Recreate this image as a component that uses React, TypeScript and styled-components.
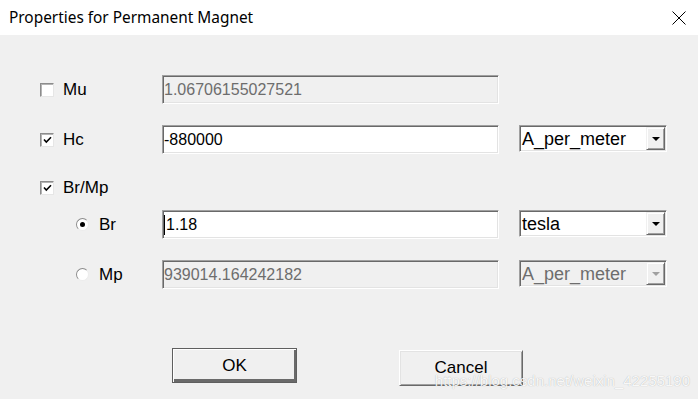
import styled, { createGlobalStyle } from 'styled-components';

const GlobalStyle = createGlobalStyle`
    html, body {
        margin: 0;
        padding: 0;
        background: #f0f0f0;
    }
    * {
        box-sizing: border-box;
    }
`;

const Dialog = styled.div`
    position: relative;
    width: 698px;
    height: 399px;
    overflow: hidden;
    display: flex;
    flex-direction: column;
    background: #f0f0f0;
    font-family: 'Liberation Sans', Arial, sans-serif;
    color: #000;
`;

const TitleBar = styled.div`
    height: 35px;
    flex: none;
    display: flex;
    align-items: center;
    justify-content: space-between;
    padding: 0 12px 0 9px;
    background: #fff;
`;

const TitleText = styled.span`
    font-family: 'Noto Sans', sans-serif;
    font-size: 15.4px;
    color: #000;
`;

const CloseIcon = styled.svg`
    width: 14px;
    height: 14px;
`;

const Form = styled.div`
    display: flex;
    flex-direction: column;
    padding-top: 40px;
`;

const Row = styled.div<{ $gap: number; $height: number }>`
    display: grid;
    grid-template-columns: 142px 337px 148px;
    column-gap: 20px;
    align-items: start;
    height: ${(p) => p.$height}px;
    margin-top: ${(p) => p.$gap}px;
`;

const Choice = styled.div<{ $indent: number; $gap: number; $height: number }>`
    display: flex;
    align-items: center;
    height: ${(p) => p.$height}px;
    padding-left: ${(p) => p.$indent}px;
    gap: ${(p) => p.$gap}px;
    font-size: 17px;
`;

const CheckBox = styled.span`
    width: 14px;
    height: 14px;
    display: flex;
    align-items: center;
    justify-content: center;
    background: #fff;
    border: 1px solid;
    border-color: #8c8c8c #e6e6e6 #e6e6e6 #8c8c8c;
    box-shadow: inset 1px 1px 0 #b4b4b4;
`;

const Radio = styled.span`
    width: 13px;
    height: 13px;
    border-radius: 50%;
    display: flex;
    align-items: center;
    justify-content: center;
    background: #fff;
    border: 1px solid;
    border-color: #8c8c8c #ececec #ececec #8c8c8c;
`;

const RadioDot = styled.span`
    width: 5px;
    height: 5px;
    border-radius: 50%;
    background: #000;
`;

const Field = styled.div<{ $disabled?: boolean }>`
    height: 29px;
    display: flex;
    align-items: center;
    padding-left: 1px;
    font-size: 16px;
    white-space: nowrap;
    background: ${(p) => (p.$disabled ? '#f0f0f0' : '#fff')};
    color: ${(p) => (p.$disabled ? '#6d6d6d' : '#000')};
    border: 1px solid;
    border-color: #a0a0a0 #fff #fff #a0a0a0;
    box-shadow: inset 1px 1px 0 #696969, inset -1px -1px 0 #e3e3e3;
`;

const Caret = styled.span`
    width: 1px;
    height: 20px;
    margin-right: 1px;
    background: #000;
`;

const Select = styled.div<{ $disabled?: boolean }>`
    height: 27px;
    display: flex;
    align-items: stretch;
    font-size: 18px;
    background: ${(p) => (p.$disabled ? '#f0f0f0' : '#fff')};
    color: ${(p) => (p.$disabled ? '#6d6d6d' : '#000')};
    border: 1px solid;
    border-color: #a0a0a0 #fff #fff #a0a0a0;
    box-shadow: inset 1px 1px 0 #696969, inset -1px -1px 0 #e3e3e3;
    padding: 1px;
`;

const SelectValue = styled.span`
    flex: 1;
    display: flex;
    align-items: center;
    padding-left: 1px;
    padding-top: 1px;
`;

const SelectButton = styled.span`
    width: 19px;
    display: flex;
    align-items: center;
    justify-content: center;
    background: #f0f0f0;
    border: 1px solid;
    border-color: #f0f0f0 #696969 #696969 #f0f0f0;
    box-shadow: inset 1px 1px 0 #fff, inset -1px -1px 0 #a0a0a0;
`;

const Arrow = styled.span<{ $disabled?: boolean }>`
    width: 0;
    height: 0;
    border-left: 4px solid transparent;
    border-right: 4px solid transparent;
    border-top: 4px solid ${(p) => (p.$disabled ? '#a0a0a0' : '#000')};
`;

const Buttons = styled.div`
    display: flex;
    align-items: flex-start;
    gap: 102px;
    padding-left: 172px;
    margin-top: 59px;
`;

const Button = styled.div<{ $default?: boolean }>`
    width: ${(p) => (p.$default ? 125 : 124)}px;
    height: ${(p) => (p.$default ? 35 : 36)}px;
    margin-top: ${(p) => (p.$default ? 0 : 2)}px;
    display: flex;
    align-items: center;
    justify-content: center;
    font-size: 17px;
    background: #f0f0f0;
    border: 1px solid;
    border-color: ${(p) => (p.$default ? '#5f5f5f' : '#fff #696969 #696969 #fff')};
    box-shadow: ${(p) =>
        p.$default
            ? 'inset 1px 1px 0 #fff, inset -2px -3px 0 #6a6a6a'
            : 'inset 1px 1px 0 #e3e3e3, inset -1px -1px 0 #a0a0a0'};
`;

const Watermark = styled.span`
    position: absolute;
    right: 8px;
    bottom: 10px;
    font-size: 15px;
    color: rgba(255, 255, 255, 0.92);
    text-shadow: 0 0 1px rgba(0, 0, 0, 0.3);
    pointer-events: none;
`;

function Check() {
    return (
        <CheckBox>
            <svg width="9" height="8" viewBox="0 0 9 8">
                <path d="M1 3.5 L3.3 6 L8 1.2" fill="none" stroke="#000" strokeWidth="1.6" />
            </svg>
        </CheckBox>
    );
}

function Dropdown({ value, disabled }: { value: string; disabled?: boolean }) {
    return (
        <Select $disabled={disabled}>
            <SelectValue>{value}</SelectValue>
            <SelectButton>
                <Arrow $disabled={disabled} />
            </SelectButton>
        </Select>
    );
}

export default function App() {
    return (
        <Dialog>
            <GlobalStyle />
            <TitleBar>
                <TitleText>Properties for Permanent Magnet</TitleText>
                <CloseIcon viewBox="0 0 14 14">
                    <path d="M0.5 0.5 L13.5 13.5 M13.5 0.5 L0.5 13.5" stroke="#000" strokeWidth="1" />
                </CloseIcon>
            </TitleBar>

            <Form>
                <Row $gap={0} $height={29}>
                    <Choice $indent={40} $gap={9} $height={29}>
                        <CheckBox />
                        Mu
                    </Choice>
                    <Field $disabled>1.06706155027521</Field>
                </Row>

                <Row $gap={21} $height={29}>
                    <Choice $indent={40} $gap={9} $height={29}>
                        <Check />
                        Hc
                    </Choice>
                    <Field>-880000</Field>
                    <Dropdown value="A_per_meter" />
                </Row>

                <Row $gap={21} $height={26}>
                    <Choice $indent={40} $gap={9} $height={26}>
                        <Check />
                        Br/Mp
                    </Choice>
                </Row>

                <Row $gap={9} $height={29}>
                    <Choice $indent={76} $gap={10} $height={29}>
                        <Radio>
                            <RadioDot />
                        </Radio>
                        Br
                    </Choice>
                    <Field>
                        <Caret />
                        1.18
                    </Field>
                    <Dropdown value="tesla" />
                </Row>

                <Row $gap={21} $height={29}>
                    <Choice $indent={76} $gap={10} $height={29}>
                        <Radio />
                        Mp
                    </Choice>
                    <Field $disabled>939014.164242182</Field>
                    <Dropdown value="A_per_meter" disabled />
                </Row>
            </Form>

            <Buttons>
                <Button $default>OK</Button>
                <Button>Cancel</Button>
            </Buttons>

            <Watermark>https://blog.csdn.net/weixin_42255190</Watermark>
        </Dialog>
    );
}
